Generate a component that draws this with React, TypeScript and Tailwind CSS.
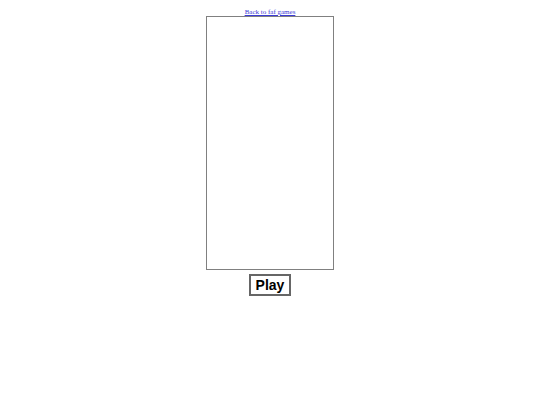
export default function App() {
  return (
    <div className="flex flex-col items-center pt-[8px]" style={{ fontFamily: '"Liberation Serif", serif' }}>
      <a href="#" className="text-[7px] leading-[8px] text-[#3b3bd6] underline font-['Liberation_Serif',serif]">
        Back to faf games
      </a>
      <div className="w-[128px] h-[254px] border border-[#808080] bg-white" />
      <button className="mt-[4px] w-[42px] h-[22px] border-2 border-[#666] bg-white text-[14px] font-bold text-black font-['Liberation_Sans',sans-serif] leading-none">
        Play
      </button>
    </div>
  );
}
